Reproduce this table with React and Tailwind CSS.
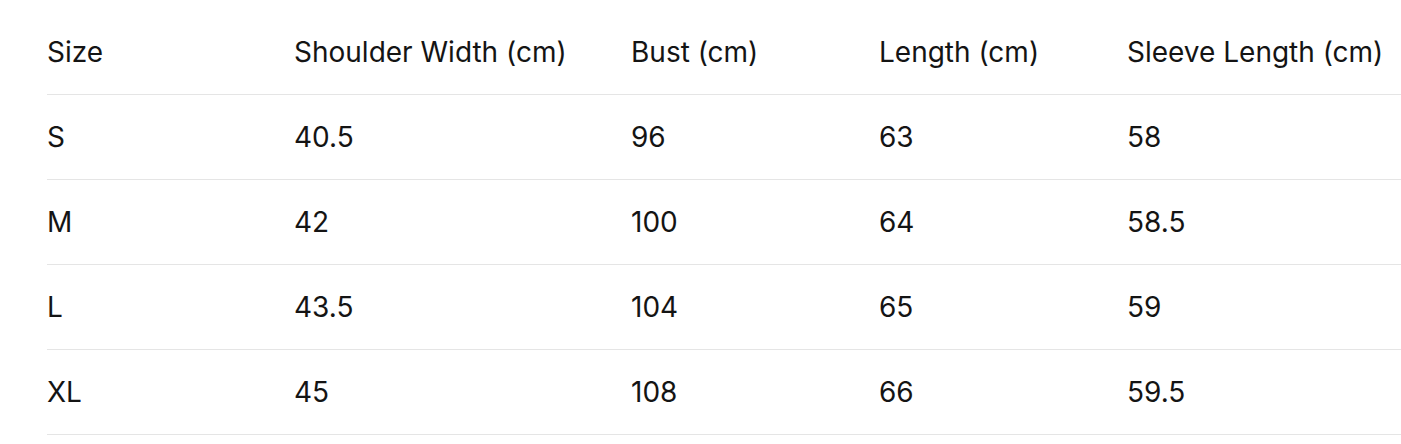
const header = ["Size", "Shoulder Width (cm)", "Bust (cm)", "Length (cm)", "Sleeve Length (cm)"];
const rows = [
  ["S", "40.5", "96", "63", "58"],
  ["M", "42", "100", "64", "58.5"],
  ["L", "43.5", "104", "65", "59"],
  ["XL", "45", "108", "66", "59.5"],
];
const widths = ["w-[247px]", "w-[337px]", "w-[248px]", "w-[248px]", "w-[274px]"];

export default function App() {
  return (
    <div className="bg-white w-[1401px] h-[444px] overflow-hidden pl-[47px] pt-[10px]" style={{ fontFamily: "Inter, 'Noto Sans', sans-serif" }}>
      <div className="w-[1400px] text-[28px] text-[#141414]">
        <div className="flex h-[85px] items-center border-b border-[#e5e5e5]">
          {header.map((h, i) => (
            <div key={i} className={`${widths[i]} shrink-0 whitespace-nowrap`}>{h}</div>
          ))}
        </div>
        {rows.map((r, ri) => (
          <div key={ri} className="flex h-[85px] items-center border-b border-[#e5e5e5]">
            {r.map((c, i) => (
              <div key={i} className={`${widths[i]} shrink-0 whitespace-nowrap`}>{c}</div>
            ))}
          </div>
        ))}
      </div>
    </div>
  );
}
